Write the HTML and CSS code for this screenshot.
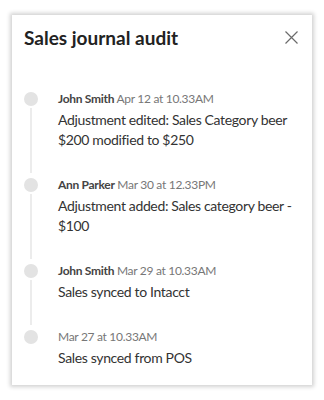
FILE: index.html
```html
<!DOCTYPE html>
<html lang="en">
<head>
    <meta charset="UTF-8">
    <meta name="viewport" content="width=device-width, initial-scale=1.0">
    <title>Sales journal audit</title>
    <link rel="stylesheet" href="styles.css">
</head>
<body>
    <div class="panel">
        <div class="panel-header">
            <h1 class="panel-title">Sales journal audit</h1>
            <button class="close-btn" aria-label="Close">
                <svg width="13" height="13" viewBox="0 0 13 13">
                    <path d="M0.5 0.5 L12.5 12.5 M12.5 0.5 L0.5 12.5" stroke="#6b6b6b" stroke-width="1.2" fill="none"/>
                </svg>
            </button>
        </div>
        <ul class="timeline">
            <li class="event">
                <div class="rail"><span class="dot"></span><span class="line"></span></div>
                <div class="event-body">
                    <div class="meta"><span class="who">John Smith</span> <span class="when">Apr 12 at 10.33AM</span></div>
                    <div class="what">Adjustment edited: Sales Category beer $200 modified to $250</div>
                </div>
            </li>
            <li class="event">
                <div class="rail"><span class="dot"></span><span class="line"></span></div>
                <div class="event-body">
                    <div class="meta"><span class="who">Ann Parker</span> <span class="when">Mar 30 at 12.33PM</span></div>
                    <div class="what">Adjustment added: Sales category beer - $100</div>
                </div>
            </li>
            <li class="event">
                <div class="rail"><span class="dot"></span><span class="line"></span></div>
                <div class="event-body">
                    <div class="meta"><span class="who">John Smith</span> <span class="when">Mar 29 at 10.33AM</span></div>
                    <div class="what">Sales synced to Intacct</div>
                </div>
            </li>
            <li class="event last">
                <div class="rail"><span class="dot"></span></div>
                <div class="event-body">
                    <div class="meta"><span class="when">Mar 27 at 10.33AM</span></div>
                    <div class="what">Sales synced from POS</div>
                </div>
            </li>
        </ul>
    </div>
</body>
</html>
```
FILE: styles.css
```css
body {
    margin: 0;
    padding: 15px 12px;
    background: #fff;
    font-family: 'Lato', 'Liberation Sans', sans-serif;
}
.panel {
    width: 300px;
    height: 370px;
    box-sizing: border-box;
    background: #fff;
    box-shadow: 0 0 4px 2px rgba(0, 0, 0, 0.18);
    padding: 11px 12px 0 12px;
}
.panel-header {
    display: flex;
    justify-content: space-between;
    align-items: flex-start;
}
.panel-title {
    margin: 0;
    font-size: 19px;
    line-height: 24px;
    font-weight: 700;
    color: #222;
}
.close-btn {
    background: none;
    border: none;
    padding: 0;
    margin: 5px 2px 0 0;
    cursor: pointer;
    line-height: 0;
}
.timeline {
    list-style: none;
    margin: 42px 0 0 0;
    padding: 0;
}
.event {
    display: flex;
    gap: 20px;
}
.rail {
    width: 14px;
    display: flex;
    flex-direction: column;
    align-items: center;
    flex-shrink: 0;
}
.dot {
    width: 14px;
    height: 14px;
    border-radius: 50%;
    background: #e3e3e3;
    flex-shrink: 0;
}
.line {
    flex: 1;
    width: 2px;
    background: #ececec;
    margin: 2px 0 5px 0;
}
.event-body {
    padding-bottom: 28px;
}
.meta {
    font-size: 12px;
    line-height: 14px;
    letter-spacing: -0.3px;
    color: #777;
}
.who {
    font-weight: 700;
    color: #444;
}
.what {
    margin-top: 4px;
    font-size: 14px;
    line-height: 20px;
    letter-spacing: -0.35px;
    color: #333;
}
```
